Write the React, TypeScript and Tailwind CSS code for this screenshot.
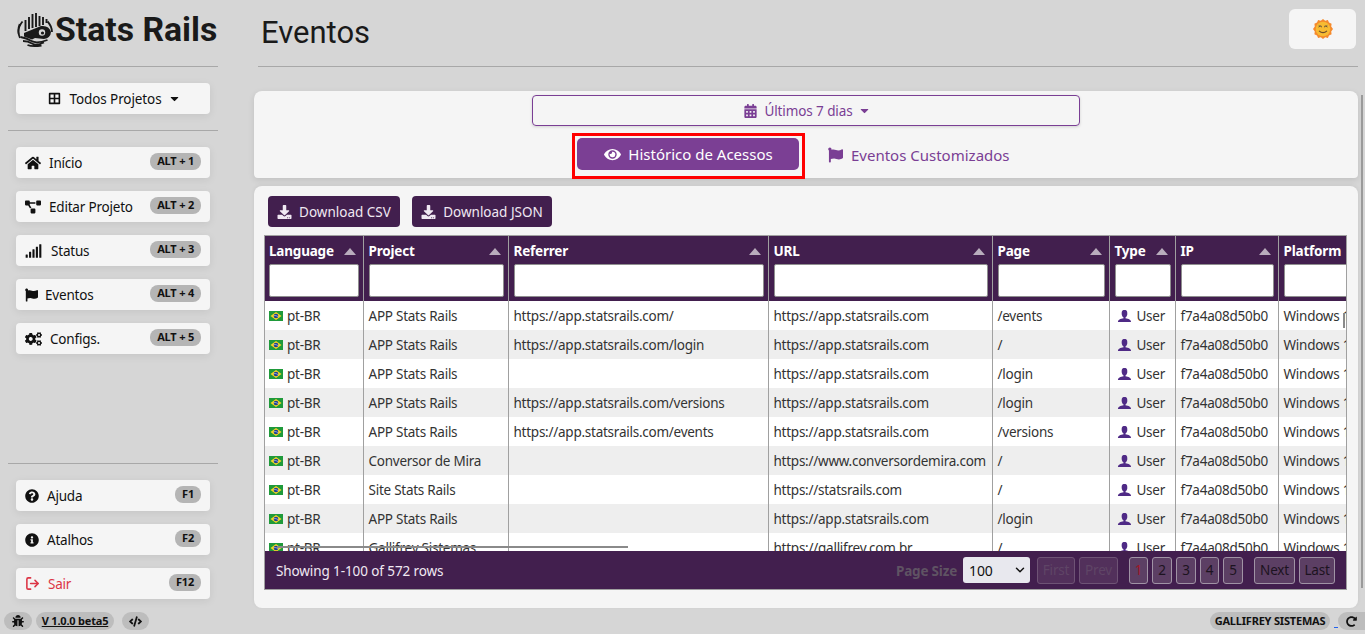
import { ReactNode } from 'react';
import {
  FaBorderAll, FaBug, FaCalendarAlt, FaCaretDown, FaCode, FaCogs, FaDownload, FaEye, FaFlag, FaHome,
  FaInfoCircle, FaProjectDiagram, FaQuestionCircle, FaRedoAlt, FaSignal,
} from 'react-icons/fa';
import { ImUser } from 'react-icons/im';
import { LuLogOut } from 'react-icons/lu';
import { ChevronDown } from 'lucide-react';

const COLUMNS = [
  { name: 'Language', width: 'w-[98px]', sort: true },
  { name: 'Project', width: 'w-[145px]', sort: true },
  { name: 'Referrer', width: 'w-[260px]', sort: true },
  { name: 'URL', width: 'w-[224px]', sort: true },
  { name: 'Page', width: 'w-[117px]', sort: true },
  { name: 'Type', width: 'w-[66px]', sort: true },
  { name: 'IP', width: 'w-[103px]', sort: true },
  { name: 'Platform', width: 'w-[120px]', sort: false },
];

const APP_URL = 'https://app.statsrails.com';

const ROWS = [
  ['APP Stats Rails', 'https://app.statsrails.com/', APP_URL, '/events'],
  ['APP Stats Rails', 'https://app.statsrails.com/login', APP_URL, '/'],
  ['APP Stats Rails', '', APP_URL, '/login'],
  ['APP Stats Rails', 'https://app.statsrails.com/versions', APP_URL, '/login'],
  ['APP Stats Rails', 'https://app.statsrails.com/events', APP_URL, '/versions'],
  ['Conversor de Mira', '', 'https://www.conversordemira.com', '/'],
  ['Site Stats Rails', '', 'https://statsrails.com', '/'],
  ['APP Stats Rails', '', APP_URL, '/login'],
  ['Gallifrey Sistemas', '', 'https://gallifrey.com.br', '/'],
];

const Logo = () => (
  <svg viewBox="0 0 36 36" className="w-[36px] h-[36px] shrink-0" fill="none" stroke="#1a1a1a">
    <path d="M5.500 9.500A16 16 0 0 0 3 26" strokeWidth="1.800" />
    <path d="M2.500 12A17 17 0 0 0 1.500 22" strokeWidth="1.400" />
    <path d="M30.500 9.500A16 16 0 0 1 35 20" strokeWidth="1.800" />
    <path d="M8.500 8v11M12 5v12M15.500 2v14M19 1v14M22.500 4v10M26 5v8M29.500 7v4" strokeWidth="1.900" />
    <path d="M7 21l17-7q8-1 10 6q-.5 6-7 7l-9-1-3 1.500-8-3z" fill="#1a1a1a" stroke="none" />
    <circle cx="25" cy="20.500" r="3.200" fill="#d6d6d6" stroke="none" />
    <circle cx="25.500" cy="21" r="1.600" fill="#1a1a1a" stroke="none" />
    <path d="M3.500 25q6 1 11 4t16-1M6 29q5 0 9 2.500t12-1M10.500 33q5 2 14 .5" strokeWidth="1.800" />
  </svg>
);

const Flag = () => (
  <svg viewBox="0 0 14 10" className="w-[14px] h-[10px] shrink-0 -mt-[1px]">
    <rect width="14" height="10" fill="#1f9a3a" />
    <path d="M7 1l5.500 4L7 9 1.500 5z" fill="#f5d327" />
    <circle cx="7" cy="5" r="2.300" fill="#1c3f94" />
    <path d="M4.900 4.600q2-.5 4.200 1" stroke="#fff" strokeWidth=".5" fill="none" />
  </svg>
);

const SunEmoji = () => (
  <svg viewBox="0 0 20 20" className="w-[20px] h-[20px]">
    <path
      d="M10 0l2.200 1.700 2.700-.7 1.100 2.600 2.600 1.100-.4 2.800L20 10l-1.800 2.500.4 2.800-2.600 1.100-1.100 2.600-2.700-.7L10 20l-2.200-1.700-2.700.7-1.100-2.600-2.600-1.100.4-2.800L0 10l1.800-2.500-.4-2.800L4 3.600 5.100 1l2.700.7z"
      fill="#f58a2c"
    />
    <circle cx="10" cy="10" r="7.300" fill="#f7bb32" />
    <path d="M5.500 8q1.800-1.600 3.500 0M11 8q1.800-1.600 3.500 0" stroke="#6b5a3a" strokeWidth="1" fill="none" />
    <path d="M5.500 6.300l3 .7M14.500 6.300l-3 .7" stroke="#8a6a3a" strokeWidth=".7" fill="none" />
    <path d="M6 11.800q4 3.600 8 0" stroke="#6b4a2a" strokeWidth="1.100" fill="none" />
  </svg>
);

const Kbd = ({ children }: { children: ReactNode }) => (
  <span className="-mt-[2px] h-[17px] px-[7px] rounded-[8px] bg-[#b5b5b5] text-[11px] tracking-[-0.2px] font-bold text-[#111] flex items-center">
    {children}
  </span>
);

const SideButton = ({ icon, label, shortcut, gap, red }: { icon: ReactNode; label: string; shortcut: string; gap: string; red?: boolean }) => (
  <div className={`h-[31px] mx-2 rounded-[4px] bg-[#f5f5f5] shadow-[0_2px_8px_rgba(0,0,0,0.08)] pl-[9px] pr-[9px] flex items-center justify-between ${red ? 'text-[#dc3545]' : 'text-[#111]'}`}>
    <span className={`flex items-center text-[13.5px] tracking-[-0.2px] ${gap}`}>
      {icon}
      <span className="pt-[2px]">{label}</span>
    </span>
    <Kbd>{shortcut}</Kbd>
  </div>
);

const Pill = ({ children, className }: { children: ReactNode; className: string }) => (
  <span className={`h-[18px] rounded-full bg-[#bdbdbd] flex items-center justify-center text-[#111] font-bold text-[11px] tracking-[-0.2px] ${className}`}>
    {children}
  </span>
);

const PageButton = ({ label, className, disabled }: { label: string; className: string; disabled?: boolean }) => (
  <span className={`h-[27px] pt-[1px] rounded-[3px] border flex items-center justify-center text-[13.5px] tracking-[-0.2px] ${disabled ? 'bg-[#52305b] border-[#6e5375] text-[#5f4566]' : 'bg-[#5c3f64] border-[#a093a5] text-[#1c1320]'} ${className}`}>
    {label}
  </span>
);

const Sidebar = () => (
  <aside className="w-[254px] shrink-0 flex flex-col pl-2 pr-[36px]">
    <div className="h-[67px] flex items-start pt-[12px] pl-[9px] gap-[3px] border-b border-[#a8a8a8] font-['Roboto',sans-serif]">
      <Logo />
      <span className="-ml-[1px] text-[33.75px] leading-[36px] font-bold text-[#1a1a1a] whitespace-nowrap">Stats Rails</span>
    </div>
    <div className="h-[31px] mx-2 mt-[16px] pl-[3px] rounded-[4px] bg-[#f5f5f5] shadow-[0_2px_8px_rgba(0,0,0,0.08)] flex items-center justify-center gap-[8px] text-[13.5px] tracking-[-0.1px] text-[#111]">
      <FaBorderAll className="w-[13px] h-[13px]" />
      <span className="pt-[2px]">Todos Projetos</span>
      <FaCaretDown className="-ml-[2px] w-[13px] h-[13px]" />
    </div>
    <div className="mt-[16px] border-t border-[#a8a8a8]" />
    <div className="mt-[16px] flex flex-col gap-[13px]">
      <SideButton icon={<FaHome className="w-[16px] h-[16px]" />} label="Início" shortcut="ALT + 1" gap="gap-[8px]" />
      <SideButton icon={<FaProjectDiagram className="w-[16px] h-[14px]" />} label="Editar Projeto" shortcut="ALT + 2" gap="gap-[8px]" />
      <SideButton icon={<FaSignal className="w-[17px] h-[14px]" />} label="Status" shortcut="ALT + 3" gap="gap-[9px]" />
      <SideButton icon={<FaFlag className="w-[13px] h-[14px]" />} label="Eventos" shortcut="ALT + 4" gap="gap-[7px]" />
      <SideButton icon={<FaCogs className="w-[17px] h-[14px]" />} label="Configs." shortcut="ALT + 5" gap="gap-[8px]" />
    </div>
    <div className="mt-auto border-t border-[#a8a8a8]" />
    <div className="mt-[16px] mb-[9px] flex flex-col gap-[13px]">
      <SideButton icon={<FaQuestionCircle className="w-[14px] h-[14px]" />} label="Ajuda" shortcut="F1" gap="gap-[8px]" />
      <SideButton icon={<FaInfoCircle className="w-[14px] h-[14px]" />} label="Atalhos" shortcut="F2" gap="gap-[8px]" />
      <SideButton icon={<LuLogOut className="w-[15px] h-[15px]" strokeWidth={2.5} />} label="Sair" shortcut="F12" gap="gap-[8px]" red />
    </div>
  </aside>
);

const DataTable = () => (
  <div className="relative ml-[10px] mt-[8px] w-[1083px] border border-[#a0a0a0] overflow-hidden">
    <div className="h-[315px] overflow-hidden">
      <table className="table-fixed border-collapse w-[1133px] text-left">
        <colgroup>
          {COLUMNS.map((c) => (
            <col key={c.name} className={c.width} />
          ))}
        </colgroup>
        <thead>
          <tr className="bg-[#421f4e] h-[65px]">
            {COLUMNS.map((c, i) => (
              <th key={c.name} className={`pr-[4px] align-top pt-[6px] ${i > 0 ? 'pl-[5px] border-l border-[#a0a0a0]' : 'pl-1'}`}>
                <div className="flex items-center justify-between text-[13.5px] leading-[19px] font-bold tracking-[-0.2px] text-white whitespace-nowrap">
                  {c.name}
                  {c.sort && <span className="mr-[3px] w-0 h-0 border-x-[6px] border-x-transparent border-b-[7px] border-b-[#b9adbd]" />}
                </div>
                <div className="mt-[3px] h-[33px] rounded-[2px] border border-[#8f8f8f] bg-white" />
              </th>
            ))}
          </tr>
        </thead>
        <tbody>
          {ROWS.map((r, i) => (
            <tr key={i} className={`h-[29px] text-[13.5px] tracking-[-0.25px] text-[#333] ${i % 2 ? 'bg-[#eeeeee]' : 'bg-white'}`}>
              <td className="px-1 pt-[2px] whitespace-nowrap overflow-hidden">
                <span className="flex items-center gap-[4px]">
                  <Flag />
                  pt-BR
                </span>
              </td>
              {r.map((cell, j) => (
                <td key={j} className="pl-[5px] pr-1 pt-[2px] border-l border-[#a0a0a0] whitespace-nowrap overflow-hidden">
                  {cell}
                </td>
              ))}
              <td className="pl-[5px] pr-1 pt-[2px] border-l border-[#a0a0a0] whitespace-nowrap overflow-hidden">
                <span className="flex items-center gap-[5px] pl-[2px]">
                  <ImUser className="-mt-[2px] w-[15px] h-[15px] text-[#4f2a86]" />
                  User
                </span>
              </td>
              <td className="pl-[5px] pr-1 pt-[2px] border-l border-[#a0a0a0] whitespace-nowrap overflow-hidden">f7a4a08d50b0</td>
              <td className="pl-[5px] pr-1 pt-[2px] border-l border-[#a0a0a0] whitespace-nowrap overflow-hidden">Windows 10</td>
            </tr>
          ))}
        </tbody>
      </table>
    </div>
    <div className="h-[38px] bg-[#421f4e] pl-[11px] pr-[11px] flex items-center text-[13.5px] tracking-[-0.1px]">
      <span className="pt-[2px] text-[#f0e8f2]">Showing 1-100 of 572 rows</span>
      <span className="ml-auto pt-[2px] font-bold tracking-[-0.2px] text-[#5f5363]">Page Size</span>
      <span className="ml-[6px] w-[67px] h-[26px] rounded-[3px] bg-[#e8e8ee] pl-[6px] pr-[3px] flex items-center justify-between text-[14px] text-[#111]">
        100
        <ChevronDown className="w-[14px] h-[14px]" strokeWidth={2.5} />
      </span>
      <span className="ml-[7px] flex gap-[4px]">
        <PageButton label="First" className="w-[38px]" disabled />
        <PageButton label="Prev" className="w-[39px]" disabled />
      </span>
      <span className="ml-[11px] flex gap-[4px]">
        <PageButton label="1" className="w-[19px] !text-[#a01525]" />
        <PageButton label="2" className="w-[20px]" />
        <PageButton label="3" className="w-[20px]" />
        <PageButton label="4" className="w-[19px]" />
        <PageButton label="5" className="w-[20px]" />
      </span>
      <span className="ml-[11px] flex gap-[4px]">
        <PageButton label="Next" className="w-[41px]" />
        <PageButton label="Last" className="w-[36px]" />
      </span>
    </div>
    {/* stray scroll handles the page paints over the grid */}
    <span className="absolute left-[12px] top-[310px] w-[351px] h-[2px] bg-[#8a8a8a]" />
    <span className="absolute left-[1078px] top-[77px] w-[2px] h-[15px] bg-[#8a8a8a]" />
  </div>
);

const App = () => (
  <div className="relative w-[1365px] h-[634px] overflow-hidden bg-[#d6d6d6] flex flex-col font-['Noto_Sans',sans-serif]">
    <div className="h-[608px] flex">
      <Sidebar />
      <main className="w-[1104px] flex flex-col">
        <header className="ml-1 h-[67px] border-b border-[#a8a8a8] flex items-start justify-between">
          <h1 className="mt-[14px] ml-[3px] text-[31px] leading-[38px] text-[#1a1a1a] font-['Roboto',sans-serif]">Eventos</h1>
          <button className="mt-[9px] mr-[2px] w-[67px] h-[40px] rounded-[6px] bg-[#f5f5f5] flex items-center justify-center">
            <SunEmoji />
          </button>
        </header>

        <section className="mt-[24px] h-[87px] rounded-t-[8px] rounded-b-[4px] bg-[#f5f5f5] shadow-[0_2px_6px_rgba(0,0,0,0.1)] pt-[4px]">
          <div className="ml-[278px] w-[548px] h-[31px] pl-[3px] rounded-[4px] border border-[#7a3e94] shadow-[0_1px_3px_rgba(0,0,0,0.15)] flex items-center justify-center gap-[7px] text-[13.5px] tracking-[-0.1px] text-[#7a3e94]">
            <FaCalendarAlt className="w-[13px] h-[14px]" />
            <span className="pt-[2px]">Últimos 7 dias</span>
            <FaCaretDown className="-ml-[2px] w-[13px] h-[13px]" />
          </div>
          <div className="mt-[7px] pl-[318px] flex items-center">
            <div className="w-[233px] h-[46px] border-[3px] border-[#ff0000] pt-[2px] pl-[2px] pr-[3px]">
              <div className="h-[32px] pl-[1px] rounded-[5px] bg-[#7b3f94] flex items-center justify-center gap-[7px] text-[15px] text-white">
                <FaEye className="w-[17px] h-[15px]" />
                <span className="pt-[1px]">Histórico de Acessos</span>
              </div>
            </div>
            <div className="ml-[23px] mb-[2px] flex items-center gap-[8px] text-[15px] text-[#7a3e94]">
              <FaFlag className="w-[15px] h-[16px]" />
              Eventos Customizados
            </div>
          </div>
        </section>

        <section className="mt-[8px] flex-1 rounded-[8px] bg-[#f5f5f5] shadow-[0_-1px_4px_rgba(0,0,0,0.06)] pt-[10px]">
          <div className="pl-[14px] flex gap-[12px]">
            <button className="w-[132px] h-[31px] rounded-[4px] bg-[#421f4e] text-[#f0e8f2] text-[13.5px] flex items-center justify-center gap-[7px]">
              <FaDownload className="w-[15px] h-[14px]" />
              <span className="pt-[2px]">Download CSV</span>
            </button>
            <button className="w-[140px] h-[31px] rounded-[4px] bg-[#421f4e] text-[#f0e8f2] text-[13.5px] flex items-center justify-center gap-[7px]">
              <FaDownload className="w-[15px] h-[14px]" />
              <span className="pt-[2px]">Download JSON</span>
            </button>
          </div>
          <DataTable />
        </section>
      </main>
    </div>

    <footer className="flex-1 flex items-start justify-between pt-[4px] pl-1">
      <div className="flex">
        <Pill className="w-[28px]"><FaBug className="w-[12px] h-[12px]" /></Pill>
        <Pill className="ml-[4px] w-[78px] underline">V 1.0.0 beta5</Pill>
        <Pill className="ml-[8px] w-[27px]"><FaCode className="w-[13px] h-[13px]" /></Pill>
      </div>
      <div className="flex">
        <Pill className="w-[120px]">GALLIFREY SISTEMAS</Pill>
        <span className="ml-[4px] mt-[15px] w-[4px] h-[1px] bg-[#2563eb]" />
        <Pill className="w-[27px] rounded-r-none"><FaRedoAlt className="w-[11px] h-[11px]" /></Pill>
      </div>
    </footer>

    {/* page scrollbar thumb on the right edge */}
    <span className="absolute left-[1361px] top-[95px] w-[2px] h-[493px] bg-[#9a9a9a]" />
  </div>
);

export default App;
